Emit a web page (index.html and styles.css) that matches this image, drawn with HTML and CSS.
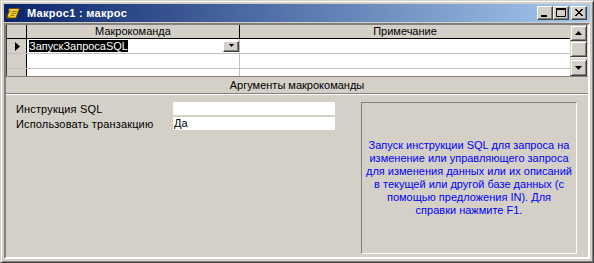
FILE: index.html
```html
<!DOCTYPE html>
<html lang="ru">
<head>
    <meta charset="UTF-8">
    <title>Макрос1 : макрос</title>
    <link rel="stylesheet" href="styles.css">
</head>
<body>
    <div class="window">
        <div class="titlebar">
            <svg class="app-icon" width="16" height="16" viewBox="0 0 16 16">
                <path d="M5 3.5h9.5l-3.5 9.5h-9.5z" fill="#f4cc30" stroke="#6a4a00"/>
                <path d="M5 3.5c-1.5 0-2 2 -0.5 2.5h1.2" fill="#fff2a0" stroke="#6a4a00"/>
                <path d="M1.5 13c1.5 0 2.2-2 0.7-2.5h-1" fill="none" stroke="#6a4a00"/>
                <path d="M7 6.5h5M6.2 8.5h5M5.4 10.5h4" stroke="#a07400"/>
            </svg>
            <span class="title">Макрос1 : макрос</span>
            <div class="caption-buttons">
                <div class="cap-btn">
                    <svg width="14" height="12" viewBox="0 0 14 12"><rect x="3" y="8" width="6" height="2" fill="#000"/></svg>
                </div>
                <div class="cap-btn">
                    <svg width="14" height="12" viewBox="0 0 14 12"><path d="M2.5 1.5h9v8h-9z" fill="none" stroke="#000"/><rect x="2" y="1" width="10" height="2" fill="#000"/></svg>
                </div>
                <div class="cap-btn close">
                    <svg width="14" height="12" viewBox="0 0 14 12" fill="#000">
                        <rect x="3" y="2" width="2" height="1"/><rect x="9" y="2" width="2" height="1"/>
                        <rect x="4" y="3" width="2" height="1"/><rect x="8" y="3" width="2" height="1"/>
                        <rect x="5" y="4" width="4" height="1"/>
                        <rect x="6" y="5" width="2" height="1"/>
                        <rect x="5" y="6" width="4" height="1"/>
                        <rect x="4" y="7" width="2" height="1"/><rect x="8" y="7" width="2" height="1"/>
                        <rect x="3" y="8" width="2" height="1"/><rect x="9" y="8" width="2" height="1"/>
                    </svg>
                </div>
            </div>
        </div>

        <div class="client">
            <div class="upper">
                <div class="grid">
                    <div class="row head">
                        <div class="sel"></div>
                        <div class="cell c1">Макрокоманда</div>
                        <div class="cell c2">Примечание</div>
                    </div>
                    <div class="row">
                        <div class="sel">
                            <svg width="6" height="9" viewBox="0 0 6 9"><path d="M0 0l5 4.5L0 9z" fill="#000"/></svg>
                        </div>
                        <div class="cell c1">
                            <span class="picked">ЗапускЗапросаSQL</span>
                            <div class="combo-btn">
                                <svg width="7" height="4" viewBox="0 0 7 4"><path d="M1 0h5l-2.5 3z" fill="#000"/></svg>
                            </div>
                        </div>
                        <div class="cell c2"></div>
                    </div>
                    <div class="row">
                        <div class="sel"></div>
                        <div class="cell c1"></div>
                        <div class="cell c2"></div>
                    </div>
                    <div class="row">
                        <div class="sel"></div>
                        <div class="cell c1"></div>
                        <div class="cell c2"></div>
                    </div>
                </div>
                <div class="vscroll">
                    <div class="sb-btn">
                        <svg width="7" height="4" viewBox="0 0 7 4"><path d="M3.5 0L7 4H0z" fill="#000"/></svg>
                    </div>
                    <div class="sb-thumb"></div>
                    <div class="sb-track"></div>
                    <div class="sb-btn">
                        <svg width="7" height="4" viewBox="0 0 7 4"><path d="M0 0h7L3.5 4z" fill="#000"/></svg>
                    </div>
                </div>
            </div>

            <div class="splitter">Аргументы макрокоманды</div>

            <div class="args">
                <div class="arg-list">
                    <div class="arg-row">
                        <span class="arg-label">Инструкция SQL</span>
                        <div class="field"></div>
                    </div>
                    <div class="arg-row">
                        <span class="arg-label">Использовать транзакцию</span>
                        <div class="field">Да</div>
                    </div>
                </div>
                <div class="help">
                    <p>Запуск инструкции SQL для запроса на<br>
                    изменение или управляющего запроса<br>
                    для изменения данных или их описаний<br>
                    в текущей или другой базе данных (с<br>
                    помощью предложения IN). Для<br>
                    справки нажмите F1.</p>
                </div>
            </div>
        </div>
    </div>
</body>
</html>
```

FILE: styles.css
```css
body {
    margin: 0;
    background-color: #d4d0c8;
    font-family: "Liberation Sans", Arial, sans-serif;
    font-size: 11px;
    color: #000;
}

.window {
    width: 594px;
    height: 263px;
    box-sizing: border-box;
    background-color: #d4d0c8;
    border: 1px solid;
    border-color: #d4d0c8 #404040 #404040 #d4d0c8;
    box-shadow: inset 1px 1px #fff, inset -1px -1px #808080;
    padding: 3px;
    display: flex;
    flex-direction: column;
}

/* title bar */

.titlebar {
    height: 18px;
    flex-shrink: 0;
    display: flex;
    align-items: center;
    padding-left: 1px;
    background: linear-gradient(to right, #0a246a, #a6caf0);
}

.app-icon {
    flex-shrink: 0;
}

.title {
    margin-left: 6px;
    color: #fff;
    font-weight: bold;
    font-size: 11px;
    letter-spacing: 0.3px;
    white-space: nowrap;
}

.caption-buttons {
    margin-left: auto;
    margin-right: 3px;
    display: flex;
}

.cap-btn {
    width: 14px;
    height: 12px;
    background-color: #d4d0c8;
    border: 1px solid;
    border-color: #fff #404040 #404040 #fff;
    box-shadow: inset -1px -1px #808080;
    display: flex;
}

.cap-btn.close {
    margin-left: 2px;
}

/* client area */

.client {
    flex: 1;
    margin-top: 1px;
    border: 2px solid;
    border-color: #808080 #fff #fff #808080;
    display: flex;
    flex-direction: column;
    min-height: 0;
}

.upper {
    height: 51px;
    flex-shrink: 0;
    display: flex;
    padding-right: 1px;
    border-bottom: 1px solid #808080;
}

.grid {
    flex: 1;
    overflow: hidden;
    border-left: 1px solid #404040;
    background-color: #fff;
}

.row {
    display: flex;
    height: 14px;
    border-bottom: 1px solid #c0c0c0;
}

.row.head {
    height: 13px;
    border-bottom: 1px solid #000;
    background-color: #d4d0c8;
}

.sel {
    width: 20px;
    flex-shrink: 0;
    background-color: #d4d0c8;
    border-right: 1px solid #000;
    display: flex;
    align-items: center;
    padding-left: 8px;
    box-sizing: border-box;
}

.cell {
    line-height: 13px;
    white-space: nowrap;
    overflow: hidden;
}

.c1 {
    width: 213px;
    flex-shrink: 0;
    border-right: 1px solid #c0c0c0;
    display: flex;
    align-items: center;
    padding-left: 2px;
    box-sizing: border-box;
}

.c2 {
    flex: 1;
}

.head .cell {
    text-align: center;
    justify-content: center;
    padding-left: 0;
}

.head .c1 {
    border-right-color: #000;
}

.picked {
    background-color: #000;
    color: #fff;
    line-height: 12px;
}

.combo-btn {
    margin-left: auto;
    width: 14px;
    height: 9px;
    background-color: #d4d0c8;
    border: 1px solid;
    border-color: #fff #404040 #404040 #fff;
    box-shadow: inset -1px -1px #808080;
    display: flex;
    align-items: center;
    justify-content: center;
}

/* scrollbar */

.vscroll {
    width: 17px;
    flex-shrink: 0;
    display: flex;
    flex-direction: column;
}

.sb-btn,
.sb-thumb {
    box-sizing: border-box;
    height: 16px;
    background-color: #d4d0c8;
    border: 1px solid;
    border-color: #d4d0c8 #404040 #404040 #d4d0c8;
    box-shadow: inset 1px 1px #fff, inset -1px -1px #808080;
    display: flex;
    align-items: center;
    justify-content: center;
}

.sb-btn:last-child {
    height: 17px;
}

.sb-track {
    height: 2px;
    background: repeating-conic-gradient(#fff 0 25%, #d4d0c8 0 50%) 0 0 / 2px 2px;
}

/* action arguments */

.splitter {
    height: 16px;
    line-height: 16px;
    text-align: center;
    border-bottom: 1px solid #808080;
}

.args {
    flex: 1;
    border-top: 1px solid #fff;
    display: flex;
    padding: 7px 11px 0 10px;
}

.arg-list {
    display: flex;
    flex-direction: column;
    gap: 2px;
}

.arg-row {
    display: flex;
    align-items: center;
    height: 13px;
}

.arg-label {
    width: 157px;
    letter-spacing: 0.15px;
    white-space: nowrap;
}

.field {
    width: 161px;
    height: 13px;
    line-height: 13px;
    padding-left: 1px;
    background-color: #fff;
}

.help {
    margin-left: auto;
    width: 216px;
    height: 152px;
    box-sizing: border-box;
    border: 1px solid;
    border-color: #808080 #fff #fff #808080;
    display: flex;
    align-items: center;
    justify-content: center;
}

.help p {
    margin: 0;
    color: #0000ff;
    text-align: center;
    line-height: 13px;
    white-space: nowrap;
}
```
